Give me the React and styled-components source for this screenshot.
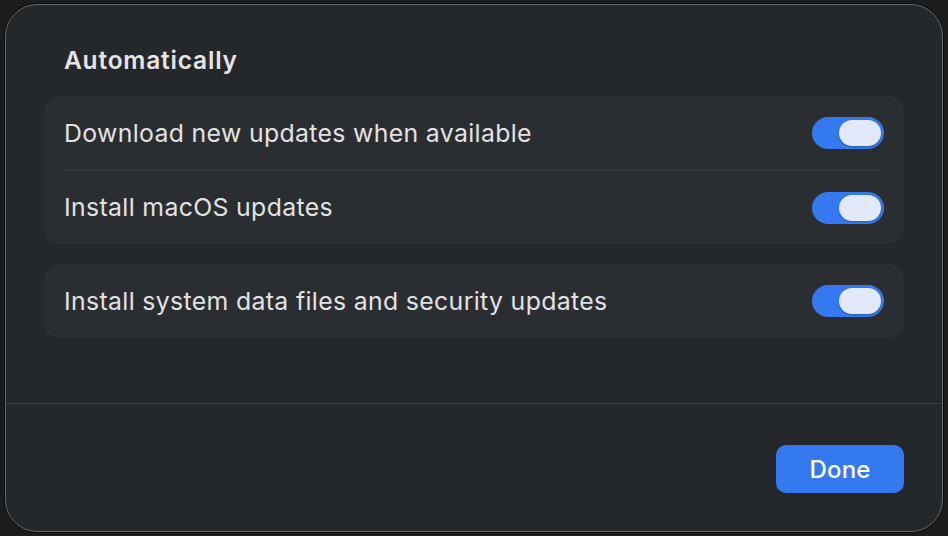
import React from "react";
import styled, { createGlobalStyle } from "styled-components";

const Global = createGlobalStyle`
  html, body { margin: 0; padding: 0; background: #1b1c1e; }
  body { font-family: Inter, "Noto Sans", sans-serif; -webkit-font-smoothing: antialiased; }
`;

const Page = styled.div`
  width: 948px;
  height: 536px;
  padding: 4px 5px 4px 5px;
  box-sizing: border-box;
`;

const Dialog = styled.div`
  width: 938px;
  height: 528px;
  box-sizing: border-box;
  background: #25282b;
  border: 1px solid #66696c;
  box-shadow: 0 0 0 1px #0e0f10;
  border-radius: 32px;
  display: flex;
  flex-direction: column;
  overflow: hidden;
`;

const Body = styled.div`
  flex: 1;
  padding: 39px 38px 0 38px;
  display: flex;
  flex-direction: column;
`;

const Heading = styled.h2`
  margin: 0 0 20px 20px;
  font-size: 24.5px;
  font-weight: 600;
  color: #e4e4e5;
  line-height: 32px;
  letter-spacing: 0.8px;
`;

const Group = styled.div`
  background: #2b2e31;
  border-radius: 15px;
  padding: 0 20px;
  margin-bottom: ${(p) => p.$gap || 0}px;
`;

const Row = styled.div`
  height: 74px;
  display: flex;
  align-items: center;
  justify-content: space-between;
  border-top: ${(p) => (p.$divider ? "1px solid #3a3d40" : "none")};
  box-sizing: border-box;
`;

const Label = styled.span`
  font-size: 24.8px;
  color: #e2e2e3;
  letter-spacing: 0.35px;
  margin-top: -1px;
`;

const Toggle = styled.div`
  width: 72px;
  height: 32px;
  border-radius: 16px;
  background: #3479f0;
  display: flex;
  align-items: center;
  justify-content: flex-end;
  padding: 0 3px;
  box-sizing: border-box;
`;

const Knob = styled.div`
  width: 42px;
  height: 26px;
  border-radius: 13px;
  background: #e1e9fb;
  box-shadow: 0 1px 2px rgba(0,0,0,0.25);
`;

const Footer = styled.div`
  height: 128px;
  border-top: 1px solid #3c3f42;
  box-sizing: border-box;
  display: flex;
  justify-content: flex-end;
  align-items: flex-start;
  padding: 41px 38px 0 0;
`;

const DoneButton = styled.button`
  width: 128px;
  height: 48px;
  border: none;
  border-radius: 10px;
  background: #3479f0;
  color: #ffffff;
  font-family: Inter, "Noto Sans", sans-serif;
  font-size: 24px;
  font-weight: 500;
  letter-spacing: 0.2px;
  cursor: pointer;
`;

const Switch = () => (
  <Toggle>
    <Knob />
  </Toggle>
);

export default function App() {
  return (
    <>
      <Global />
      <Page>
        <Dialog>
          <Body>
            <Heading>Automatically</Heading>
            <Group $gap={20}>
              <Row>
                <Label>Download new updates when available</Label>
                <Switch />
              </Row>
              <Row $divider>
                <Label>Install macOS updates</Label>
                <Switch />
              </Row>
            </Group>
            <Group>
              <Row>
                <Label>Install system data files and security updates</Label>
                <Switch />
              </Row>
            </Group>
          </Body>
          <Footer>
            <DoneButton>Done</DoneButton>
          </Footer>
        </Dialog>
      </Page>
    </>
  );
}
